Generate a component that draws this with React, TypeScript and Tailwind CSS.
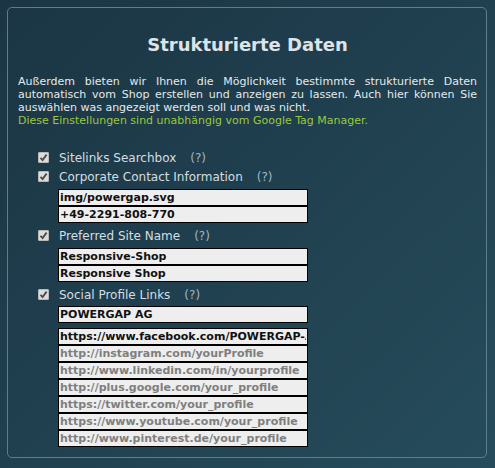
const font = { fontFamily: '"DejaVu Sans", Verdana, sans-serif' };

function Check() {
  return (
    <span className="flex h-[11px] w-[11px] items-center justify-center rounded-[2px] bg-[#dcdcdc] shadow-[inset_0_0_0_1px_#b8b8b8]">
      <svg width="9" height="9" viewBox="0 0 9 9">
        <path d="M1.5 4.8 L3.6 7 L7.6 1.6" fill="none" stroke="#4a4a4a" strokeWidth="1.8" />
      </svg>
    </span>
  );
}

function Option({ label }: { label: string }) {
  return (
    <div className="flex h-[19px] items-center">
      <Check />
      <span className="ml-[10px] text-[12px] text-[#d6dde0]">{label}</span>
      <span className="ml-[14px] text-[12px] text-[#9fb6c2]">(?)</span>
    </div>
  );
}

function Field({ value, placeholder }: { value?: string; placeholder?: string }) {
  return (
    <input
      readOnly
      defaultValue={value}
      placeholder={placeholder}
      className="block h-[17px] w-[250px] border border-black bg-[#eeeeee] px-[1px] text-[11px] font-bold text-[#111] placeholder:text-[#7f7f7f] outline-none"
      style={font}
    />
  );
}

export default function App() {
  const socials = [
    'http://instagram.com/yourProfile',
    'http://www.linkedin.com/in/yourprofile',
    'http://plus.google.com/your_profile',
    'https://twitter.com/your_profile',
    'https://www.youtube.com/your_profile',
    'http://www.pinterest.de/your_profile',
  ];

  return (
    <div
      className="h-[468px] w-[495px] bg-gradient-to-br from-[#1b3544] to-[#264c5b] pt-[7px] pl-[7px]"
      style={font}
    >
      <div className="h-[451px] w-[480px] rounded-[5px] border border-[#5f7e8a] pl-[10px] pr-[9px] pt-[25px]">
        <h2 className="text-center text-[18px] font-bold leading-[23px] text-[#dde3e6]">
          Strukturierte Daten
        </h2>
        <p className="mt-[19px] text-justify text-[11px] leading-[13px] text-[#e4e9eb]">
          Außerdem bieten wir Ihnen die Möglichkeit bestimmte strukturierte Daten automatisch vom Shop erstellen und
          anzeigen zu lassen. Auch hier können Sie auswählen was angezeigt werden soll und was nicht.
        </p>
        <p className="text-[11px] leading-[13px] text-[#9bc83c]">
          Diese Einstellungen sind unabhängig vom Google Tag Manager.
        </p>

        <div className="mt-[21px] pl-[20px]">
          <Option label="Sitelinks Searchbox" />
          <Option label="Corporate Contact Information" />
          <div className="mb-[3px] mt-[3px] pl-[20px]">
            <Field value="img/powergap.svg" />
            <Field value="+49-2291-808-770" />
          </div>
          <Option label="Preferred Site Name" />
          <div className="mb-[3px] mt-[3px] pl-[20px]">
            <Field value="Responsive-Shop" />
            <Field value="Responsive Shop" />
          </div>
          <Option label="Social Profile Links" />
          <div className="mt-[2px] pl-[20px]">
            <Field value="POWERGAP AG" />
            <div className="mt-[5px]">
              <Field value="https://www.facebook.com/POWERGAP-AG" />
              {socials.map((s) => (
                <Field key={s} placeholder={s} />
              ))}
            </div>
          </div>
        </div>
      </div>
    </div>
  );
}
